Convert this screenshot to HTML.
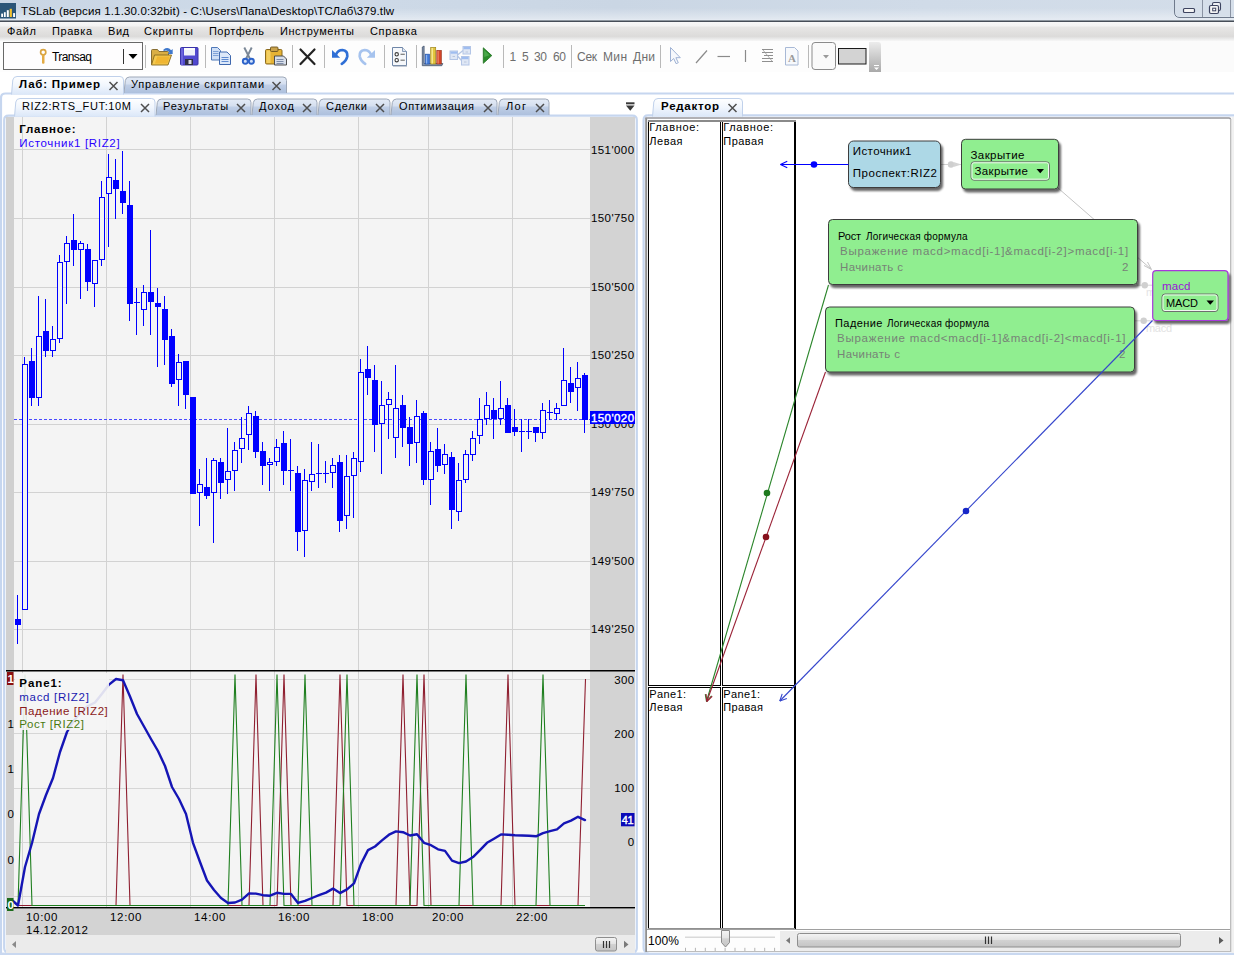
<!DOCTYPE html>
<html><head><meta charset="utf-8"><title>TSLab</title><style>
html,body{margin:0;padding:0;background:#fff;}
body{width:1234px;height:955px;overflow:hidden;position:relative;font-family:"Liberation Sans",sans-serif;}
.t{position:absolute;white-space:pre;}
svg.l{position:absolute;left:0;top:0;}
</style></head><body>
<svg class="l" width="1234" height="955" viewBox="0 0 1234 955"><defs>
<linearGradient id="gTitle" x1="0" y1="0" x2="1" y2="0"><stop offset="0" stop-color="#c9d6e5"/><stop offset="0.25" stop-color="#cedae8"/><stop offset="0.5" stop-color="#cad6e4"/><stop offset="0.75" stop-color="#d0dbe8"/><stop offset="1" stop-color="#d3dde9"/></linearGradient>
<linearGradient id="gGlow" x1="0" y1="0" x2="0" y2="1"><stop offset="0" stop-color="#ffffff" stop-opacity="0"/><stop offset="1" stop-color="#ffffff" stop-opacity="0.45"/></linearGradient>
<linearGradient id="gMenu" x1="0" y1="0" x2="0" y2="1"><stop offset="0" stop-color="#f8f8f8"/><stop offset="0.2" stop-color="#f3f3f3"/><stop offset="0.28" stop-color="#e7e6e5"/><stop offset="0.76" stop-color="#dcdbda"/><stop offset="0.88" stop-color="#e9e9e9"/><stop offset="1" stop-color="#f7f7f7"/></linearGradient>
<linearGradient id="gTabA" x1="0" y1="0" x2="0" y2="1"><stop offset="0" stop-color="#ffffff"/><stop offset="0.5" stop-color="#f1f6fd"/><stop offset="1" stop-color="#dbe7f8"/></linearGradient>
<linearGradient id="gTabI" x1="0" y1="0" x2="0" y2="1"><stop offset="0" stop-color="#e4ebf6"/><stop offset="0.42" stop-color="#d6e0f0"/><stop offset="0.52" stop-color="#bfcee6"/><stop offset="1" stop-color="#adc0dd"/></linearGradient>
<linearGradient id="gGrip" x1="0" y1="0" x2="0" y2="1"><stop offset="0" stop-color="#ececec"/><stop offset="1" stop-color="#a9a9a9"/></linearGradient>
<linearGradient id="gThumb" x1="0" y1="0" x2="0" y2="1"><stop offset="0" stop-color="#f4f4f4"/><stop offset="0.45" stop-color="#e4e4e4"/><stop offset="0.5" stop-color="#d2d2d2"/><stop offset="1" stop-color="#c4c4c4"/></linearGradient>
<filter id="sh" x="-10%" y="-10%" width="125%" height="135%"><feGaussianBlur in="SourceAlpha" stdDeviation="1.1"/><feOffset dx="2.3" dy="2.6"/><feComponentTransfer><feFuncA type="linear" slope="0.6"/></feComponentTransfer><feMerge><feMergeNode/><feMergeNode in="SourceGraphic"/></feMerge></filter>
</defs><rect x="0" y="0" width="1234" height="21" fill="url(#gTitle)" />
<rect x="0" y="8" width="1234" height="12" fill="url(#gGlow)"/>
<rect x="0" y="19" width="1234" height="1" fill="#e4eaf2" />
<rect x="0" y="20" width="1234" height="1" fill="#8e969f" />
<rect x="0" y="21" width="1234" height="1" fill="#474e58" />
<rect x="0" y="3" width="16" height="15.5" fill="#2a5578" />
<rect x="1.2" y="13.6" width="1.8" height="3.4000000000000004" fill="#fff" />
<rect x="3.9" y="12.2" width="1.8" height="4.800000000000001" fill="#fff" />
<rect x="6.8" y="10.2" width="2" height="6.800000000000001" fill="#fff" />
<rect x="9.7" y="8.8" width="2.2" height="8.2" fill="#f2c230" />
<rect x="13.1" y="13.1" width="2" height="3.9000000000000004" fill="#fff" /></svg>
<span class="t" style="left:21.0px;top:6.0px;font-size:11.5px;line-height:11.5px;color:#000;letter-spacing:0.14px;">TSLab (версия 1.1.30.0:32bit) - C:\Users\Папа\Desktop\ТСЛаб\379.tlw</span>
<svg class="l" width="1234" height="955" viewBox="0 0 1234 955"><path d="M1174.5,0 V12 Q1174.5,17.5 1180,17.5 H1234" fill="none" stroke="#6f7a8c" stroke-width="1"/>
<path d="M1175.5,0 V12 Q1175.5,16.5 1180,16.5 H1234 V0 Z" fill="#d6dfea"/>
<line x1="1202.5" y1="0" x2="1202.5" y2="17" stroke="#8a93a3" stroke-width="1" />
<line x1="1230.5" y1="0" x2="1230.5" y2="17" stroke="#8a93a3" stroke-width="1" />
<rect x="1183.5" y="8.5" width="11" height="4" rx="1" fill="#f4f4f4" stroke="#3d4460" stroke-width="1.2"/>
<rect x="1212.5" y="2.5" width="8" height="8" rx="1.5" fill="#eef0f4" stroke="#3d4460" stroke-width="1.1"/>
<rect x="1209.5" y="5.5" width="9" height="8" rx="1.5" fill="#f4f4f4" stroke="#3d4460" stroke-width="1.2"/>
<rect x="1212.7" y="8.2" width="3" height="2.6" fill="#fff" stroke="#3d4460" stroke-width="1"/>
<rect x="0" y="22" width="1234" height="19" fill="url(#gMenu)" /></svg>
<span class="t" style="left:7.0px;top:26.0px;font-size:11px;line-height:11px;color:#000;letter-spacing:0.65px;">Файл</span>
<span class="t" style="left:52.0px;top:26.0px;font-size:11px;line-height:11px;color:#000;letter-spacing:0.57px;">Правка</span>
<span class="t" style="left:108.0px;top:26.0px;font-size:11px;line-height:11px;color:#000;letter-spacing:0.55px;">Вид</span>
<span class="t" style="left:144.0px;top:26.0px;font-size:11px;line-height:11px;color:#000;letter-spacing:0.85px;">Скрипты</span>
<span class="t" style="left:209.0px;top:26.0px;font-size:11px;line-height:11px;color:#000;letter-spacing:0.44px;">Портфель</span>
<span class="t" style="left:280.0px;top:26.0px;font-size:11px;line-height:11px;color:#000;letter-spacing:0.54px;">Инструменты</span>
<span class="t" style="left:370.0px;top:26.0px;font-size:11px;line-height:11px;color:#000;letter-spacing:0.64px;">Справка</span>
<svg class="l" width="1234" height="955" viewBox="0 0 1234 955"><rect x="0" y="41" width="1234" height="31" fill="#fbfbfb" />
<rect x="0" y="41" width="870" height="31" fill="#fdfdfd" />
<rect x="3.5" y="42.5" width="139" height="27" fill="#fefdfe" stroke="#686868" stroke-width="1"/>
<line x1="123.5" y1="49" x2="123.5" y2="64" stroke="#333" stroke-width="1" />
<path d="M128.5,54 h9 l-4.5,5 z" fill="#000"/>
<circle cx="43.2" cy="52.3" r="2.6" fill="#fff" stroke="#d9a441" stroke-width="1.7"/><rect x="42" y="54.5" width="2.5" height="9.2" rx="1" fill="#e3ab45"/></svg>
<span class="t" style="left:52.0px;top:51.0px;font-size:12px;line-height:12px;color:#000;letter-spacing:-0.60px;">Transaq</span>
<svg class="l" width="1234" height="955" viewBox="0 0 1234 955"><line x1="145.5" y1="45" x2="145.5" y2="68" stroke="#b9b9b9" stroke-width="1" />
<line x1="205.5" y1="45" x2="205.5" y2="68" stroke="#b9b9b9" stroke-width="1" />
<line x1="292.5" y1="45" x2="292.5" y2="68" stroke="#b9b9b9" stroke-width="1" />
<line x1="324.5" y1="45" x2="324.5" y2="68" stroke="#b9b9b9" stroke-width="1" />
<line x1="384.5" y1="45" x2="384.5" y2="68" stroke="#b9b9b9" stroke-width="1" />
<line x1="416.5" y1="45" x2="416.5" y2="68" stroke="#b9b9b9" stroke-width="1" />
<line x1="503.5" y1="45" x2="503.5" y2="68" stroke="#b9b9b9" stroke-width="1" />
<line x1="571.5" y1="45" x2="571.5" y2="68" stroke="#b9b9b9" stroke-width="1" />
<line x1="660.5" y1="45" x2="660.5" y2="68" stroke="#b9b9b9" stroke-width="1" />
<line x1="808.5" y1="45" x2="808.5" y2="68" stroke="#b9b9b9" stroke-width="1" />
<path d="M151.5,64.5 V50.5 q0,-1 1,-1 h5 l1.5,2 h8.5 q1,0 1,1 V55" fill="#d9ae45" stroke="#7c6228" stroke-width="0.9"/>
<path d="M151.5,65 l3,-10 h17 l-3.5,10 z" fill="#f4c94e" stroke="#86691f" stroke-width="0.9"/>
<path d="M155,63.5 l2.2,-7 h12.5 l-2.4,7 z" fill="#f0b632"/>
<path d="M163.5,49.5 q4.5,-3.2 7.6,0.8 l1.6,-1.4 v5 h-5 l1.7,-1.7 q-2.2,-2.6 -5.9,-1 z" fill="#3f78cc"/>
<rect x="180.5" y="47.5" width="17.5" height="17.5" rx="1" fill="#5049cf" stroke="#3a33a8" stroke-width="1"/>
<rect x="184" y="48" width="11" height="7.5" fill="#eef0f8" />
<rect x="184" y="48" width="11" height="2" fill="#fdfdfd" />
<rect x="185" y="59" width="8" height="6" fill="#2f2f45" />
<rect x="188.5" y="60" width="3" height="4" fill="#d5d5e4" />
<rect x="181" y="48" width="2" height="17" fill="#6a63dc" />
<path d="M211.5,47.5 h6 l3,3 v9.5 h-9 z" fill="#cfdff6" stroke="#4f78b8" stroke-width="1"/>
<line x1="213" y1="51.5" x2="218.5" y2="51.5" stroke="#7fa2d8" stroke-width="1" />
<line x1="213" y1="53.5" x2="218.5" y2="53.5" stroke="#7fa2d8" stroke-width="1" />
<line x1="213" y1="55.5" x2="218.5" y2="55.5" stroke="#7fa2d8" stroke-width="1" />
<path d="M219.5,52 h7.5 l3.5,3.5 v9 h-11 z" fill="#dce8f9" stroke="#3f68ae" stroke-width="1"/>
<line x1="221.5" y1="57.5" x2="228.5" y2="57.5" stroke="#5f8ad0" stroke-width="1" />
<line x1="221.5" y1="59.5" x2="228.5" y2="59.5" stroke="#5f8ad0" stroke-width="1" />
<line x1="221.5" y1="61.5" x2="228.5" y2="61.5" stroke="#5f8ad0" stroke-width="1" />
<path d="M244.3,47.5 L249.8,58.5 M251.7,47.5 L246.2,58.5" stroke="#7a8796" stroke-width="1.9" fill="none"/>
<circle cx="245.3" cy="61.3" r="2.5" fill="#cfe0fa" stroke="#2c62c9" stroke-width="1.9"/><circle cx="251.4" cy="61.3" r="2.5" fill="#cfe0fa" stroke="#2c62c9" stroke-width="1.9"/>
<rect x="265.5" y="49.5" width="16.5" height="14.5" rx="1.2" fill="#e6b335" stroke="#8a6a1e" stroke-width="1"/>
<rect x="266.5" y="50.5" width="4" height="12.5" fill="#f3cf62" />
<rect x="270.5" y="47" width="7.5" height="4.5" rx="1" fill="#c9a24a" stroke="#6b5420" stroke-width="0.9"/>
<path d="M274.5,56 h9 l3,3 v6 h-12 z" fill="#d7deea" stroke="#4e4e4e" stroke-width="1"/>
<line x1="276.5" y1="59.5" x2="283.5" y2="59.5" stroke="#7d8ca8" stroke-width="1" />
<line x1="276.5" y1="61.5" x2="283.5" y2="61.5" stroke="#7d8ca8" stroke-width="1" />
<line x1="276.5" y1="63.5" x2="283.5" y2="63.5" stroke="#7d8ca8" stroke-width="1" />
<path d="M300.5,49.5 L314.5,64 M314.5,49.5 L300.5,64" stroke="#222" stroke-width="2.2" fill="none" stroke-linecap="round"/>
<path d="M332,50 V57.8 H340.2 Z" fill="#2f6fd6"/>
<path d="M336,54.5 Q338,50 342.5,50 Q347.8,50.6 347.3,56.2 Q346.4,61 341.8,63.8" fill="none" stroke="#2f6fd6" stroke-width="2.7" stroke-linecap="round"/>
<path d="M375,50 V57.8 H366.8 Z" fill="#a6c3ee"/>
<path d="M371,54.5 Q369,50 364.5,50 Q359.2,50.6 359.7,56.2 Q360.6,61 365.2,63.8" fill="none" stroke="#a6c3ee" stroke-width="2.7" stroke-linecap="round"/>
<path d="M392.5,47.5 h10 l4,4 v14 h-14 z" fill="#f6f8fb" stroke="#6f86a8" stroke-width="1"/>
<path d="M402.5,47.5 v4 h4" fill="#dfe6f0" stroke="#6f86a8" stroke-width="0.8"/>
<line x1="393" y1="66" x2="407" y2="66" stroke="#8b98ad" stroke-width="1" />
<circle cx="396.7" cy="54.3" r="1.7" fill="#fff" stroke="#3d3d3d" stroke-width="1.1"/>
<line x1="400.5" y1="54.3" x2="404.8" y2="54.3" stroke="#777" stroke-width="1.2" />
<circle cx="396.7" cy="60.2" r="1.7" fill="#fff" stroke="#3d3d3d" stroke-width="1.1"/>
<line x1="400.5" y1="60.2" x2="404.8" y2="60.2" stroke="#777" stroke-width="1.2" />
<path d="M422.3,47 l1.8,-1 V63.5 L442.8,63.5 l-1,2.2 H422.3 Z" fill="#8496b0" stroke="#46566e" stroke-width="0.8"/>
<rect x="425.2" y="54.2" width="4.3" height="9.8" fill="#3f78d8" stroke="#2a56a8" stroke-width="0.7"/>
<rect x="430.7" y="47.5" width="5" height="16.5" fill="#e3c43c" stroke="#9c861c" stroke-width="0.7"/>
<rect x="436.8" y="50.5" width="4.5" height="13.5" fill="#d64528" stroke="#98301a" stroke-width="0.7"/>
<rect x="431.5" y="48" width="1.5" height="15.5" fill="#f4e690" />
<rect x="426" y="55" width="1.2" height="8.5" fill="#8db4f0" />
<rect x="437.5" y="51" width="1.2" height="12.5" fill="#f08a6a" />
<path d="M457.5,55 L463,50.5 M457.5,56 L461.5,60.5" fill="none" stroke="#b5c6e4" stroke-width="1.3"/>
<rect x="450" y="51" width="7.5" height="8.5" fill="#dfe7f5" stroke="#b3c5e6" stroke-width="1"/>
<rect x="450.5" y="51.5" width="6.5" height="2.2" fill="#9fbdf0" />
<line x1="452.5" y1="56.5" x2="455" y2="56.5" stroke="#b9c6dc" stroke-width="1" />
<rect x="463" y="46.5" width="7.5" height="7.5" fill="#dfe7f5" stroke="#b3c5e6" stroke-width="1"/>
<rect x="463.5" y="47.0" width="6.5" height="2.2" fill="#9fbdf0" />
<line x1="465.5" y1="52.0" x2="468" y2="52.0" stroke="#b9c6dc" stroke-width="1" />
<rect x="461.5" y="56.5" width="7.5" height="8.5" fill="#dfe7f5" stroke="#b3c5e6" stroke-width="1"/>
<rect x="462.0" y="57.0" width="6.5" height="2.2" fill="#9fbdf0" />
<line x1="464.0" y1="62.0" x2="466.5" y2="62.0" stroke="#b9c6dc" stroke-width="1" />
<path d="M483.3,47.8 L491.8,55.6 L483.3,63.3 Z" fill="#2a8c2a" stroke="#1d6e1d" stroke-width="0.8"/>
<path d="M484.2,50 L489.5,55.3 L484.2,57 Z" fill="#4aa84a"/>
<path d="M670.5,47.5 v14 l3.2,-3 l2.4,5.2 l2.2,-1 l-2.4,-5 h4.4 z" fill="#f6f8fc" stroke="#9fb2d4" stroke-width="1"/>
<line x1="696" y1="63" x2="707" y2="50.5" stroke="#8a8a8a" stroke-width="1.2" />
<line x1="717.5" y1="56.5" x2="730" y2="56.5" stroke="#8a8a8a" stroke-width="1.2" />
<line x1="745.5" y1="50" x2="745.5" y2="62" stroke="#8a8a8a" stroke-width="1.2" />
<line x1="762" y1="49.5" x2="773" y2="49.5" stroke="#8f8f8f" stroke-width="1" />
<line x1="762" y1="52.5" x2="773" y2="52.5" stroke="#8f8f8f" stroke-width="1" />
<line x1="764" y1="55.5" x2="773" y2="55.5" stroke="#8f8f8f" stroke-width="1" />
<line x1="762" y1="58.5" x2="773" y2="58.5" stroke="#8f8f8f" stroke-width="1" />
<line x1="762" y1="61.5" x2="773" y2="61.5" stroke="#8f8f8f" stroke-width="1" />
<line x1="763" y1="50" x2="772" y2="61" stroke="#9a9a9a" stroke-width="0.8" />
<path d="M785.5,47.5 h9 l3.5,3.5 v14 h-12.5 z" fill="#f7f9fc" stroke="#a8b9d6" stroke-width="1"/></svg>
<span class="t" style="left:788.0px;top:53.0px;font-size:11px;line-height:11px;color:#9a9a9a;font-weight:bold;font-family:'Liberation Serif',serif;">A</span>
<span class="t" style="left:509.5px;top:51.0px;font-size:12px;line-height:12px;color:#6d6d6d;">1</span>
<span class="t" style="left:522.0px;top:51.0px;font-size:12px;line-height:12px;color:#6d6d6d;">5</span>
<span class="t" style="left:534.0px;top:51.0px;font-size:12px;line-height:12px;color:#6d6d6d;letter-spacing:-0.35px;">30</span>
<span class="t" style="left:553.0px;top:51.0px;font-size:12px;line-height:12px;color:#6d6d6d;letter-spacing:-0.35px;">60</span>
<span class="t" style="left:577.0px;top:51.0px;font-size:12px;line-height:12px;color:#6d6d6d;letter-spacing:-0.29px;">Сек</span>
<span class="t" style="left:603.0px;top:51.0px;font-size:12px;line-height:12px;color:#6d6d6d;letter-spacing:0.34px;">Мин</span>
<span class="t" style="left:633.0px;top:51.0px;font-size:12px;line-height:12px;color:#6d6d6d;letter-spacing:0.27px;">Дни</span>
<svg class="l" width="1234" height="955" viewBox="0 0 1234 955"><rect x="812" y="42.5" width="23.5" height="27" rx="3" fill="#fafafa" stroke="#8b8b8b" stroke-width="1"/>
<path d="M823,55 h6 l-3,3.5 z" fill="#9a9a9a"/>
<rect x="838.5" y="48.5" width="27.5" height="15.5" fill="#d3d3d3" stroke="#1a1a1a" stroke-width="1"/>
<path d="M869,42 H878 Q881,42 881,45 V72 H869 Z" fill="url(#gGrip)"/>
<line x1="874" y1="65.5" x2="879" y2="65.5" stroke="#fff" stroke-width="1" />
<path d="M874,67.5 h5 l-2.5,2.5 z" fill="#fff"/>
<path d="M1,955 V98 Q1,93.5 5.5,93.5 H1234" fill="none" stroke="#c6d6ef" stroke-width="2.2"/>
<path d="M124.0,93 L125.3,80.5 Q126.0,77.0 129.5,77.0 H283 Q286.5,77.0 286.5,80.5 V93 Z" fill="url(#gTabI)" stroke="none"/>
<path d="M124.0,93 L125.3,80.5 Q126.0,77.0 129.5,77.0 H283 Q286.5,77.0 286.5,80.5 V93" fill="none" stroke="#9ea8b8" stroke-width="1"/>
<path d="M11.5,94.5 L12.8,80 Q13.5,76.5 17,76.5 H120 Q123.5,76.5 123.5,80 V94.5 Z" fill="url(#gTabA)" stroke="none"/>
<path d="M11.5,94.5 L12.8,80 Q13.5,76.5 17,76.5 H120 Q123.5,76.5 123.5,80 V94.5" fill="none" stroke="#c0d1eb" stroke-width="1"/></svg>
<span class="t" style="left:19.0px;top:79.0px;font-size:11.5px;line-height:11.5px;color:#000;font-weight:bold;letter-spacing:0.78px;">Лаб: Пример</span>
<svg class="l" width="1234" height="955" viewBox="0 0 1234 955"><path d="M109.5,82 L117.5,90 M117.5,82 L109.5,90" stroke="#4e4e4e" stroke-width="1.5" fill="none"/></svg>
<span class="t" style="left:131.0px;top:79.0px;font-size:11px;line-height:11px;color:#000;letter-spacing:0.82px;">Управление скриптами</span>
<svg class="l" width="1234" height="955" viewBox="0 0 1234 955"><path d="M272.5,82 L280.5,90 M280.5,82 L272.5,90" stroke="#4e4e4e" stroke-width="1.5" fill="none"/>
<path d="M9,952.6 Q4.2,952.6 4.2,948 V120 Q4.2,115.6 8.5,115.6 H632.5 Q636.8,115.6 636.8,120 V948 Q636.8,952.6 632,952.6" fill="none" stroke="#c6d6ef" stroke-width="2.2"/>
<path d="M498.0,115 L499.3,102.5 Q500.0,99.0 503.5,99.0 H545.5 Q549.0,99.0 549.0,102.5 V115 Z" fill="url(#gTabI)" stroke="none"/>
<path d="M498.0,115 L499.3,102.5 Q500.0,99.0 503.5,99.0 H545.5 Q549.0,99.0 549.0,102.5 V115" fill="none" stroke="#9ea8b8" stroke-width="1"/>
<path d="M391.0,115 L392.3,102.5 Q393.0,99.0 396.5,99.0 H493.5 Q497.0,99.0 497.0,102.5 V115 Z" fill="url(#gTabI)" stroke="none"/>
<path d="M391.0,115 L392.3,102.5 Q393.0,99.0 396.5,99.0 H493.5 Q497.0,99.0 497.0,102.5 V115" fill="none" stroke="#9ea8b8" stroke-width="1"/>
<path d="M318.0,115 L319.3,102.5 Q320.0,99.0 323.5,99.0 H386.5 Q390.0,99.0 390.0,102.5 V115 Z" fill="url(#gTabI)" stroke="none"/>
<path d="M318.0,115 L319.3,102.5 Q320.0,99.0 323.5,99.0 H386.5 Q390.0,99.0 390.0,102.5 V115" fill="none" stroke="#9ea8b8" stroke-width="1"/>
<path d="M252.0,115 L253.3,102.5 Q254.0,99.0 257.5,99.0 H313.5 Q317.0,99.0 317.0,102.5 V115 Z" fill="url(#gTabI)" stroke="none"/>
<path d="M252.0,115 L253.3,102.5 Q254.0,99.0 257.5,99.0 H313.5 Q317.0,99.0 317.0,102.5 V115" fill="none" stroke="#9ea8b8" stroke-width="1"/>
<path d="M156.0,115 L157.3,102.5 Q158.0,99.0 161.5,99.0 H247.5 Q251.0,99.0 251.0,102.5 V115 Z" fill="url(#gTabI)" stroke="none"/>
<path d="M156.0,115 L157.3,102.5 Q158.0,99.0 161.5,99.0 H247.5 Q251.0,99.0 251.0,102.5 V115" fill="none" stroke="#9ea8b8" stroke-width="1"/>
<path d="M14.5,116.5 L15.8,102 Q16.5,98.5 20,98.5 H151.5 Q155.0,98.5 155.0,102 V116.5 Z" fill="url(#gTabA)" stroke="none"/>
<path d="M14.5,116.5 L15.8,102 Q16.5,98.5 20,98.5 H151.5 Q155.0,98.5 155.0,102 V116.5" fill="none" stroke="#c0d1eb" stroke-width="1"/></svg>
<span class="t" style="left:22.0px;top:101.0px;font-size:11px;line-height:11px;color:#000;letter-spacing:0.64px;">RIZ2:RTS_FUT:10M</span>
<svg class="l" width="1234" height="955" viewBox="0 0 1234 955"><path d="M141,104 L149,112 M149,104 L141,112" stroke="#4e4e4e" stroke-width="1.5" fill="none"/></svg>
<span class="t" style="left:163.0px;top:101.0px;font-size:11px;line-height:11px;color:#000;letter-spacing:0.79px;">Результаты</span>
<svg class="l" width="1234" height="955" viewBox="0 0 1234 955"><path d="M237,104 L245,112 M245,104 L237,112" stroke="#4e4e4e" stroke-width="1.5" fill="none"/></svg>
<span class="t" style="left:259.0px;top:101.0px;font-size:11px;line-height:11px;color:#000;letter-spacing:0.94px;">Доход</span>
<svg class="l" width="1234" height="955" viewBox="0 0 1234 955"><path d="M303,104 L311,112 M311,104 L303,112" stroke="#4e4e4e" stroke-width="1.5" fill="none"/></svg>
<span class="t" style="left:326.0px;top:101.0px;font-size:11px;line-height:11px;color:#000;letter-spacing:0.70px;">Сделки</span>
<svg class="l" width="1234" height="955" viewBox="0 0 1234 955"><path d="M376,104 L384,112 M384,104 L376,112" stroke="#4e4e4e" stroke-width="1.5" fill="none"/></svg>
<span class="t" style="left:399.0px;top:101.0px;font-size:11px;line-height:11px;color:#000;letter-spacing:0.60px;">Оптимизация</span>
<svg class="l" width="1234" height="955" viewBox="0 0 1234 955"><path d="M484,104 L492,112 M492,104 L484,112" stroke="#4e4e4e" stroke-width="1.5" fill="none"/></svg>
<span class="t" style="left:506.0px;top:101.0px;font-size:11px;line-height:11px;color:#000;letter-spacing:1.33px;">Лог</span>
<svg class="l" width="1234" height="955" viewBox="0 0 1234 955"><path d="M536,104 L544,112 M544,104 L536,112" stroke="#4e4e4e" stroke-width="1.5" fill="none"/>
<rect x="626" y="102.3" width="8.5" height="2" fill="#3a3a3a" />
<path d="M626,105.6 h8.5 l-4.25,5.2 z" fill="#3a3a3a"/>
<path d="M648.5,952.6 Q643.6,952.6 643.6,948 V120 Q643.6,115.4 648,115.4 H1234" fill="none" stroke="#c6d6ef" stroke-width="2.2"/>
<path d="M652.5,116.5 L653.8,102 Q654.5,98.5 658,98.5 H739 Q742.5,98.5 742.5,102 V116.5 Z" fill="url(#gTabA)" stroke="none"/>
<path d="M652.5,116.5 L653.8,102 Q654.5,98.5 658,98.5 H739 Q742.5,98.5 742.5,102 V116.5" fill="none" stroke="#c0d1eb" stroke-width="1"/></svg>
<span class="t" style="left:661.0px;top:101.0px;font-size:11.5px;line-height:11.5px;color:#000;font-weight:bold;letter-spacing:0.75px;">Редактор</span>
<svg class="l" width="1234" height="955" viewBox="0 0 1234 955"><path d="M728.5,104 L736.5,112 M736.5,104 L728.5,112" stroke="#4e4e4e" stroke-width="1.5" fill="none"/>
<rect x="0" y="952.6" width="1234" height="2.4" fill="#c9d8f0" />
<rect x="6" y="117" width="8" height="819" fill="#d0d0d0" />
<rect x="14" y="117" width="576" height="790" fill="#f4f4f4" />
<rect x="590" y="117" width="45" height="790" fill="#d3d3d3" />
<rect x="6" y="908" width="629" height="27" fill="#d3d3d3" />
<rect x="6" y="935" width="629" height="18" fill="#ebebeb" />
<line x1="22.5" y1="117" x2="22.5" y2="912" stroke="#d2d2d2" stroke-width="1" />
<line x1="106.5" y1="117" x2="106.5" y2="912" stroke="#d2d2d2" stroke-width="1" />
<line x1="190.5" y1="117" x2="190.5" y2="912" stroke="#d2d2d2" stroke-width="1" />
<line x1="274.5" y1="117" x2="274.5" y2="912" stroke="#d2d2d2" stroke-width="1" />
<line x1="358.5" y1="117" x2="358.5" y2="912" stroke="#d2d2d2" stroke-width="1" />
<line x1="428.5" y1="117" x2="428.5" y2="912" stroke="#d2d2d2" stroke-width="1" />
<line x1="512.5" y1="117" x2="512.5" y2="912" stroke="#d2d2d2" stroke-width="1" />
<line x1="14" y1="149.5" x2="590" y2="149.5" stroke="#d2d2d2" stroke-width="1" />
<line x1="14" y1="218.5" x2="590" y2="218.5" stroke="#d2d2d2" stroke-width="1" />
<line x1="14" y1="287.5" x2="590" y2="287.5" stroke="#d2d2d2" stroke-width="1" />
<line x1="14" y1="355.5" x2="590" y2="355.5" stroke="#d2d2d2" stroke-width="1" />
<line x1="14" y1="424.5" x2="590" y2="424.5" stroke="#d2d2d2" stroke-width="1" />
<line x1="14" y1="492.5" x2="590" y2="492.5" stroke="#d2d2d2" stroke-width="1" />
<line x1="14" y1="561.5" x2="590" y2="561.5" stroke="#d2d2d2" stroke-width="1" />
<line x1="14" y1="629.5" x2="590" y2="629.5" stroke="#d2d2d2" stroke-width="1" />
<line x1="14" y1="679.5" x2="590" y2="679.5" stroke="#d6d6d6" stroke-width="1" />
<line x1="14" y1="733.5" x2="590" y2="733.5" stroke="#d6d6d6" stroke-width="1" />
<line x1="14" y1="788.5" x2="590" y2="788.5" stroke="#d6d6d6" stroke-width="1" />
<line x1="14" y1="842.5" x2="590" y2="842.5" stroke="#d6d6d6" stroke-width="1" />
<line x1="14" y1="896.5" x2="590" y2="896.5" stroke="#d6d6d6" stroke-width="1" /></svg>
<span class="t" style="left:591.0px;top:145.0px;font-size:11.5px;line-height:11.5px;color:#000;letter-spacing:0.41px;">151'000</span>
<span class="t" style="left:591.0px;top:213.0px;font-size:11.5px;line-height:11.5px;color:#000;letter-spacing:0.41px;">150'750</span>
<span class="t" style="left:591.0px;top:282.0px;font-size:11.5px;line-height:11.5px;color:#000;letter-spacing:0.41px;">150'500</span>
<span class="t" style="left:591.0px;top:350.0px;font-size:11.5px;line-height:11.5px;color:#000;letter-spacing:0.41px;">150'250</span>
<span class="t" style="left:591.0px;top:419.0px;font-size:11.5px;line-height:11.5px;color:#000;letter-spacing:0.41px;">150'000</span>
<span class="t" style="left:591.0px;top:487.0px;font-size:11.5px;line-height:11.5px;color:#000;letter-spacing:0.41px;">149'750</span>
<span class="t" style="left:591.0px;top:556.0px;font-size:11.5px;line-height:11.5px;color:#000;letter-spacing:0.41px;">149'500</span>
<span class="t" style="left:591.0px;top:624.0px;font-size:11.5px;line-height:11.5px;color:#000;letter-spacing:0.41px;">149'250</span>
<svg class="l" width="1234" height="955" viewBox="0 0 1234 955"><line x1="14" y1="419.5" x2="590" y2="419.5" stroke="#4a4aff" stroke-width="1" stroke-dasharray="3 2"/>
<rect x="17" y="595" width="1" height="49" fill="#0000ff"/>
<rect x="15" y="619" width="6" height="6" fill="#0000ff"/>
<rect x="24" y="357" width="1" height="253" fill="#0000ff"/>
<rect x="22.5" y="364.5" width="5" height="245" fill="#f4f4f4" stroke="#0000ff" stroke-width="1"/>
<rect x="31" y="348" width="1" height="58" fill="#0000ff"/>
<rect x="29" y="361" width="6" height="37" fill="#0000ff"/>
<rect x="38" y="296" width="1" height="110" fill="#0000ff"/>
<rect x="36.5" y="336.5" width="5" height="61" fill="#f4f4f4" stroke="#0000ff" stroke-width="1"/>
<rect x="45" y="299" width="1" height="58" fill="#0000ff"/>
<rect x="43" y="331" width="6" height="20" fill="#0000ff"/>
<rect x="52" y="326" width="1" height="31" fill="#0000ff"/>
<rect x="50.5" y="339.5" width="5" height="11" fill="#f4f4f4" stroke="#0000ff" stroke-width="1"/>
<rect x="59" y="255" width="1" height="88" fill="#0000ff"/>
<rect x="57.5" y="262.5" width="5" height="76" fill="#f4f4f4" stroke="#0000ff" stroke-width="1"/>
<rect x="66" y="236" width="1" height="68" fill="#0000ff"/>
<rect x="64.5" y="243.5" width="5" height="18" fill="#f4f4f4" stroke="#0000ff" stroke-width="1"/>
<rect x="73" y="214" width="1" height="52" fill="#0000ff"/>
<rect x="71" y="240" width="6" height="10" fill="#0000ff"/>
<rect x="80" y="241" width="1" height="58" fill="#0000ff"/>
<rect x="78.5" y="243.5" width="5" height="6" fill="#f4f4f4" stroke="#0000ff" stroke-width="1"/>
<rect x="87" y="244" width="1" height="47" fill="#0000ff"/>
<rect x="85" y="249" width="6" height="33" fill="#0000ff"/>
<rect x="94" y="260" width="1" height="47" fill="#0000ff"/>
<rect x="92.5" y="260.5" width="5" height="23" fill="#f4f4f4" stroke="#0000ff" stroke-width="1"/>
<rect x="101" y="181" width="1" height="85" fill="#0000ff"/>
<rect x="99.5" y="197.5" width="5" height="62" fill="#f4f4f4" stroke="#0000ff" stroke-width="1"/>
<rect x="108" y="154" width="1" height="93" fill="#0000ff"/>
<rect x="106.5" y="177.5" width="5" height="16" fill="#f4f4f4" stroke="#0000ff" stroke-width="1"/>
<rect x="115" y="159" width="1" height="60" fill="#0000ff"/>
<rect x="113" y="180" width="6" height="9" fill="#0000ff"/>
<rect x="122" y="151" width="1" height="63" fill="#0000ff"/>
<rect x="120" y="191" width="6" height="12" fill="#0000ff"/>
<rect x="129" y="181" width="1" height="140" fill="#0000ff"/>
<rect x="127" y="205" width="6" height="99" fill="#0000ff"/>
<rect x="136" y="288" width="1" height="47" fill="#0000ff"/>
<rect x="134" y="302" width="6" height="1" fill="#0000ff"/>
<rect x="143" y="285" width="1" height="41" fill="#0000ff"/>
<rect x="141.5" y="292.5" width="5" height="17" fill="#f4f4f4" stroke="#0000ff" stroke-width="1"/>
<rect x="150" y="230" width="1" height="105" fill="#0000ff"/>
<rect x="148" y="292" width="6" height="10" fill="#0000ff"/>
<rect x="157" y="288" width="1" height="79" fill="#0000ff"/>
<rect x="155" y="303" width="6" height="4" fill="#0000ff"/>
<rect x="164" y="296" width="1" height="69" fill="#0000ff"/>
<rect x="162" y="309" width="6" height="31" fill="#0000ff"/>
<rect x="171" y="329" width="1" height="58" fill="#0000ff"/>
<rect x="169" y="336" width="6" height="48" fill="#0000ff"/>
<rect x="178" y="354" width="1" height="52" fill="#0000ff"/>
<rect x="176.5" y="362.5" width="5" height="17" fill="#f4f4f4" stroke="#0000ff" stroke-width="1"/>
<rect x="185" y="361" width="1" height="48" fill="#0000ff"/>
<rect x="183" y="361" width="6" height="34" fill="#0000ff"/>
<rect x="192" y="397" width="1" height="97" fill="#0000ff"/>
<rect x="190" y="397" width="6" height="97" fill="#0000ff"/>
<rect x="199" y="469" width="1" height="57" fill="#0000ff"/>
<rect x="197.5" y="484.5" width="5" height="8" fill="#f4f4f4" stroke="#0000ff" stroke-width="1"/>
<rect x="206" y="458" width="1" height="41" fill="#0000ff"/>
<rect x="204" y="487" width="6" height="9" fill="#0000ff"/>
<rect x="213" y="458" width="1" height="85" fill="#0000ff"/>
<rect x="211.5" y="460.5" width="5" height="32" fill="#f4f4f4" stroke="#0000ff" stroke-width="1"/>
<rect x="220" y="458" width="1" height="41" fill="#0000ff"/>
<rect x="218" y="462" width="6" height="21" fill="#0000ff"/>
<rect x="227" y="428" width="1" height="66" fill="#0000ff"/>
<rect x="225.5" y="471.5" width="5" height="8" fill="#f4f4f4" stroke="#0000ff" stroke-width="1"/>
<rect x="234" y="442" width="1" height="49" fill="#0000ff"/>
<rect x="232.5" y="450.5" width="5" height="20" fill="#f4f4f4" stroke="#0000ff" stroke-width="1"/>
<rect x="241" y="417" width="1" height="46" fill="#0000ff"/>
<rect x="239.5" y="438.5" width="5" height="10" fill="#f4f4f4" stroke="#0000ff" stroke-width="1"/>
<rect x="248" y="406" width="1" height="44" fill="#0000ff"/>
<rect x="246.5" y="413.5" width="5" height="21" fill="#f4f4f4" stroke="#0000ff" stroke-width="1"/>
<rect x="255" y="411" width="1" height="47" fill="#0000ff"/>
<rect x="253" y="416" width="6" height="36" fill="#0000ff"/>
<rect x="262" y="442" width="1" height="43" fill="#0000ff"/>
<rect x="260" y="451" width="6" height="15" fill="#0000ff"/>
<rect x="269" y="458" width="1" height="33" fill="#0000ff"/>
<rect x="267.5" y="462.5" width="5" height="2" fill="#f4f4f4" stroke="#0000ff" stroke-width="1"/>
<rect x="276" y="439" width="1" height="27" fill="#0000ff"/>
<rect x="274.5" y="447.5" width="5" height="14" fill="#f4f4f4" stroke="#0000ff" stroke-width="1"/>
<rect x="283" y="431" width="1" height="54" fill="#0000ff"/>
<rect x="281" y="443" width="6" height="28" fill="#0000ff"/>
<rect x="290" y="439" width="1" height="52" fill="#0000ff"/>
<rect x="288" y="470" width="6" height="1" fill="#0000ff"/>
<rect x="297" y="466" width="1" height="85" fill="#0000ff"/>
<rect x="295" y="473" width="6" height="59" fill="#0000ff"/>
<rect x="304" y="469" width="1" height="88" fill="#0000ff"/>
<rect x="302.5" y="480.5" width="5" height="50" fill="#f4f4f4" stroke="#0000ff" stroke-width="1"/>
<rect x="311" y="442" width="1" height="49" fill="#0000ff"/>
<rect x="309.5" y="474.5" width="5" height="7" fill="#f4f4f4" stroke="#0000ff" stroke-width="1"/>
<rect x="318" y="444" width="1" height="44" fill="#0000ff"/>
<rect x="316" y="473" width="6" height="1" fill="#0000ff"/>
<rect x="325" y="461" width="1" height="22" fill="#0000ff"/>
<rect x="323" y="473" width="6" height="1" fill="#0000ff"/>
<rect x="332" y="458" width="1" height="30" fill="#0000ff"/>
<rect x="330.5" y="465.5" width="5" height="7" fill="#f4f4f4" stroke="#0000ff" stroke-width="1"/>
<rect x="339" y="455" width="1" height="77" fill="#0000ff"/>
<rect x="337" y="462" width="6" height="59" fill="#0000ff"/>
<rect x="346" y="455" width="1" height="74" fill="#0000ff"/>
<rect x="344.5" y="476.5" width="5" height="39" fill="#f4f4f4" stroke="#0000ff" stroke-width="1"/>
<rect x="353" y="452" width="1" height="66" fill="#0000ff"/>
<rect x="351.5" y="458.5" width="5" height="17" fill="#f4f4f4" stroke="#0000ff" stroke-width="1"/>
<rect x="360" y="359" width="1" height="113" fill="#0000ff"/>
<rect x="358.5" y="372.5" width="5" height="89" fill="#f4f4f4" stroke="#0000ff" stroke-width="1"/>
<rect x="367" y="346" width="1" height="49" fill="#0000ff"/>
<rect x="365" y="369" width="6" height="9" fill="#0000ff"/>
<rect x="374" y="365" width="1" height="87" fill="#0000ff"/>
<rect x="372" y="380" width="6" height="45" fill="#0000ff"/>
<rect x="381" y="381" width="1" height="93" fill="#0000ff"/>
<rect x="379.5" y="405.5" width="5" height="18" fill="#f4f4f4" stroke="#0000ff" stroke-width="1"/>
<rect x="388" y="392" width="1" height="47" fill="#0000ff"/>
<rect x="386.5" y="399.5" width="5" height="5" fill="#f4f4f4" stroke="#0000ff" stroke-width="1"/>
<rect x="395" y="365" width="1" height="93" fill="#0000ff"/>
<rect x="393.5" y="408.5" width="5" height="29" fill="#f4f4f4" stroke="#0000ff" stroke-width="1"/>
<rect x="402" y="395" width="1" height="52" fill="#0000ff"/>
<rect x="400" y="405" width="6" height="23" fill="#0000ff"/>
<rect x="409" y="417" width="1" height="49" fill="#0000ff"/>
<rect x="407" y="427" width="6" height="17" fill="#0000ff"/>
<rect x="416" y="400" width="1" height="63" fill="#0000ff"/>
<rect x="414.5" y="416.5" width="5" height="26" fill="#f4f4f4" stroke="#0000ff" stroke-width="1"/>
<rect x="423" y="411" width="1" height="74" fill="#0000ff"/>
<rect x="421" y="413" width="6" height="67" fill="#0000ff"/>
<rect x="430" y="442" width="1" height="63" fill="#0000ff"/>
<rect x="428.5" y="451.5" width="5" height="28" fill="#f4f4f4" stroke="#0000ff" stroke-width="1"/>
<rect x="437" y="428" width="1" height="44" fill="#0000ff"/>
<rect x="435" y="449" width="6" height="17" fill="#0000ff"/>
<rect x="444" y="444" width="1" height="30" fill="#0000ff"/>
<rect x="442.5" y="454.5" width="5" height="10" fill="#f4f4f4" stroke="#0000ff" stroke-width="1"/>
<rect x="451" y="452" width="1" height="77" fill="#0000ff"/>
<rect x="449" y="457" width="6" height="53" fill="#0000ff"/>
<rect x="458" y="463" width="1" height="58" fill="#0000ff"/>
<rect x="456.5" y="480.5" width="5" height="31" fill="#f4f4f4" stroke="#0000ff" stroke-width="1"/>
<rect x="465" y="450" width="1" height="33" fill="#0000ff"/>
<rect x="463.5" y="454.5" width="5" height="25" fill="#f4f4f4" stroke="#0000ff" stroke-width="1"/>
<rect x="472" y="431" width="1" height="30" fill="#0000ff"/>
<rect x="470.5" y="438.5" width="5" height="16" fill="#f4f4f4" stroke="#0000ff" stroke-width="1"/>
<rect x="479" y="398" width="1" height="46" fill="#0000ff"/>
<rect x="477.5" y="419.5" width="5" height="16" fill="#f4f4f4" stroke="#0000ff" stroke-width="1"/>
<rect x="486" y="392" width="1" height="33" fill="#0000ff"/>
<rect x="484.5" y="405.5" width="5" height="13" fill="#f4f4f4" stroke="#0000ff" stroke-width="1"/>
<rect x="493" y="398" width="1" height="41" fill="#0000ff"/>
<rect x="491" y="410" width="6" height="9" fill="#0000ff"/>
<rect x="500" y="381" width="1" height="44" fill="#0000ff"/>
<rect x="498.5" y="408.5" width="5" height="10" fill="#f4f4f4" stroke="#0000ff" stroke-width="1"/>
<rect x="507" y="398" width="1" height="35" fill="#0000ff"/>
<rect x="505" y="405" width="6" height="28" fill="#0000ff"/>
<rect x="514" y="409" width="1" height="27" fill="#0000ff"/>
<rect x="512" y="427" width="6" height="5" fill="#0000ff"/>
<rect x="521" y="419" width="1" height="33" fill="#0000ff"/>
<rect x="519" y="431" width="6" height="1" fill="#0000ff"/>
<rect x="528" y="419" width="1" height="20" fill="#0000ff"/>
<rect x="526" y="431" width="6" height="1" fill="#0000ff"/>
<rect x="535" y="427" width="1" height="15" fill="#0000ff"/>
<rect x="533" y="427" width="6" height="6" fill="#0000ff"/>
<rect x="542" y="403" width="1" height="36" fill="#0000ff"/>
<rect x="540.5" y="410.5" width="5" height="22" fill="#f4f4f4" stroke="#0000ff" stroke-width="1"/>
<rect x="549" y="400" width="1" height="20" fill="#0000ff"/>
<rect x="547" y="412" width="6" height="1" fill="#0000ff"/>
<rect x="556" y="403" width="1" height="17" fill="#0000ff"/>
<rect x="554.5" y="408.5" width="5" height="5" fill="#f4f4f4" stroke="#0000ff" stroke-width="1"/>
<rect x="563" y="348" width="1" height="58" fill="#0000ff"/>
<rect x="561.5" y="380.5" width="5" height="25" fill="#f4f4f4" stroke="#0000ff" stroke-width="1"/>
<rect x="570" y="367" width="1" height="36" fill="#0000ff"/>
<rect x="568" y="383" width="6" height="9" fill="#0000ff"/>
<rect x="577" y="362" width="1" height="49" fill="#0000ff"/>
<rect x="575.5" y="378.5" width="5" height="9" fill="#f4f4f4" stroke="#0000ff" stroke-width="1"/>
<rect x="584" y="373" width="1" height="60" fill="#0000ff"/>
<rect x="582" y="375" width="6" height="45" fill="#0000ff"/>
<rect x="590" y="411" width="45" height="13" fill="#0000ff" /></svg>
<span class="t" style="left:591.0px;top:413.0px;font-size:11.5px;line-height:11.5px;color:#fff;letter-spacing:0.41px;-webkit-text-stroke:0.4px #fff;">150'020</span>
<span class="t" style="left:19.3px;top:124.0px;font-size:11.5px;line-height:11.5px;color:#000;font-weight:bold;letter-spacing:0.76px;">Главное:</span>
<span class="t" style="left:19.3px;top:138.0px;font-size:11.5px;line-height:11.5px;color:#2a00ff;letter-spacing:0.69px;">Источник1 [RIZ2]</span>
<svg class="l" width="1234" height="955" viewBox="0 0 1234 955"><rect x="6" y="670" width="629" height="1.5" fill="#000" />
<polyline points="18,905.5 116,905.5 123,674.5 130,905.5 249,905.5 256,674.5 263,905.5 277,905.5 284,674.5 291,905.5 333,905.5 340,674.5 347,905.5 396,905.5 403,674.5 410,905.5 417,905.5 424,674.5 431,905.5 501,905.5 508,674.5 515,905.5 578,905.5 585.5,679" fill="none" stroke="#8f1f30" stroke-width="1.1" stroke-linejoin="miter"/>
<polyline points="18,905.5 18,905.5 25,674.5 32,905.5 228,905.5 235,674.5 242,905.5 270,905.5 277,674.5 284,905.5 298,905.5 305,674.5 312,905.5 340,905.5 347,674.5 354,905.5 410,905.5 417,674.5 424,905.5 459,905.5 466,674.5 473,905.5 536,905.5 543,674.5 550,905.5 585,905.5" fill="none" stroke="#1f7f1f" stroke-width="1.1" stroke-linejoin="miter"/>
<polyline points="13,901 18,905.5 25,867 32,843 39,814 46,795 53,778 60,752 67,732 74,720.5 81,712 88,706 95,702.5 102,693.8 109,684.6 116,679 123,680.2 130,696.5 137,714 144,726.5 151,739 158,751 165,766 172,787 179,799 186,814 193,842.8 200,862 207,880.5 214,890 221,898 228,903 235,902.5 242,899.6 249,893.4 256,893.6 263,895.2 270,895.7 277,892.8 284,893.9 291,893.9 298,902.9 305,900.9 312,898 319,895.2 326,892.6 333,888.6 340,893.1 347,889.4 354,883.4 361,863.9 368,850.1 375,846.5 382,840.4 389,834.7 396,831.4 403,832.2 410,835.5 417,834.2 424,842.8 431,845.2 438,849.3 445,850.9 452,860.6 459,863.1 466,861.5 473,857.1 480,850.1 487,842.8 494,838.7 501,834.4 508,834.7 515,835.2 522,835.5 529,835.8 536,836.3 543,833.1 550,831.1 557,829.3 564,823.3 571,820.6 578,816.8 585,820.1" fill="none" stroke="#1515b5" stroke-width="2.4" stroke-linejoin="round" stroke-linecap="round"/>
<rect x="15" y="673" width="94" height="57" fill="#f5f5f5" fill-opacity="0.9"/></svg>
<span class="t" style="left:19.3px;top:678.0px;font-size:11.5px;line-height:11.5px;color:#000;font-weight:bold;letter-spacing:0.92px;">Pane1:</span>
<span class="t" style="left:19.3px;top:692.0px;font-size:11.5px;line-height:11.5px;color:#1a1ab0;letter-spacing:0.69px;">macd [RIZ2]</span>
<span class="t" style="left:19.3px;top:706.0px;font-size:11.5px;line-height:11.5px;color:#8b1a1a;letter-spacing:0.54px;">Падение [RIZ2]</span>
<span class="t" style="left:19.3px;top:719.0px;font-size:11.5px;line-height:11.5px;color:#4a7a10;letter-spacing:0.56px;">Рост [RIZ2]</span>
<svg class="l" width="1234" height="955" viewBox="0 0 1234 955"><rect x="7" y="672" width="6.5" height="13" fill="#8b1010" /></svg>
<span class="t" style="left:7.5px;top:674.0px;font-size:11.5px;line-height:11.5px;color:#fff;font-weight:bold;">1</span>
<span class="t" style="left:7.5px;top:719.0px;font-size:11.5px;line-height:11.5px;color:#000;">1</span>
<span class="t" style="left:7.5px;top:764.0px;font-size:11.5px;line-height:11.5px;color:#000;">1</span>
<span class="t" style="left:7.5px;top:809.0px;font-size:11.5px;line-height:11.5px;color:#000;">0</span>
<span class="t" style="left:7.5px;top:855.0px;font-size:11.5px;line-height:11.5px;color:#000;">0</span>
<span class="t" style="left:614.2px;top:675.0px;font-size:11.5px;line-height:11.5px;color:#000;letter-spacing:0.41px;">300</span>
<span class="t" style="left:614.2px;top:729.0px;font-size:11.5px;line-height:11.5px;color:#000;letter-spacing:0.41px;">200</span>
<span class="t" style="left:614.2px;top:783.0px;font-size:11.5px;line-height:11.5px;color:#000;letter-spacing:0.41px;">100</span>
<span class="t" style="left:627.7px;top:837.0px;font-size:11.5px;line-height:11.5px;color:#000;">0</span>
<svg class="l" width="1234" height="955" viewBox="0 0 1234 955"><rect x="621" y="813" width="13.5" height="13.3" fill="#0a0ab8" /></svg>
<span class="t" style="left:621.7px;top:815.0px;font-size:11px;line-height:11px;color:#fff;letter-spacing:-0.23px;-webkit-text-stroke:0.4px #fff;">41</span>
<svg class="l" width="1234" height="955" viewBox="0 0 1234 955"><rect x="6" y="907" width="629" height="1.4" fill="#000" />
<rect x="7" y="898" width="6.5" height="13" fill="#1c6b1c" /></svg>
<span class="t" style="left:7.5px;top:900.0px;font-size:11.5px;line-height:11.5px;color:#fff;font-weight:bold;">0</span>
<span class="t" style="left:26.0px;top:912.0px;font-size:11.5px;line-height:11.5px;color:#000;letter-spacing:0.68px;">10:00</span>
<span class="t" style="left:110.0px;top:912.0px;font-size:11.5px;line-height:11.5px;color:#000;letter-spacing:0.68px;">12:00</span>
<span class="t" style="left:194.0px;top:912.0px;font-size:11.5px;line-height:11.5px;color:#000;letter-spacing:0.68px;">14:00</span>
<span class="t" style="left:278.0px;top:912.0px;font-size:11.5px;line-height:11.5px;color:#000;letter-spacing:0.68px;">16:00</span>
<span class="t" style="left:362.0px;top:912.0px;font-size:11.5px;line-height:11.5px;color:#000;letter-spacing:0.68px;">18:00</span>
<span class="t" style="left:432.0px;top:912.0px;font-size:11.5px;line-height:11.5px;color:#000;letter-spacing:0.68px;">20:00</span>
<span class="t" style="left:516.0px;top:912.0px;font-size:11.5px;line-height:11.5px;color:#000;letter-spacing:0.68px;">22:00</span>
<span class="t" style="left:26.0px;top:925.0px;font-size:11.5px;line-height:11.5px;color:#000;letter-spacing:0.49px;">14.12.2012</span>
<svg class="l" width="1234" height="955" viewBox="0 0 1234 955"><path d="M12,944.5 l4,-3.5 v7 z" fill="#8a8a8a"/>
<path d="M624,940.8 l4.5,3.6 l-4.5,3.6 z" fill="#7a7a7a"/>
<rect x="595.5" y="937.5" width="21" height="13.5" rx="2" fill="url(#gThumb)" stroke="#8e8e8e" stroke-width="1"/>
<line x1="603.5" y1="941" x2="603.5" y2="948" stroke="#333" stroke-width="1.2" />
<line x1="606.5" y1="941" x2="606.5" y2="948" stroke="#333" stroke-width="1.2" />
<line x1="609.5" y1="941" x2="609.5" y2="948" stroke="#333" stroke-width="1.2" />
<rect x="645.2" y="117.2" width="586.5" height="835" fill="#fff" />
<path d="M646.2,952 V118" fill="none" stroke="#8f8f8f" stroke-width="2"/>
<path d="M645.2,118 H1229 Q1230.5,118 1230.5,119.5" fill="none" stroke="#96969c" stroke-width="1.4"/>
<rect x="1231.5" y="117" width="2.5" height="836" fill="#f1f1f1" />
<path d="M1230.7,119 V951.3 H647" fill="none" stroke="#bdbdbd" stroke-width="1.4"/>
<rect x="648.5" y="120.5" width="72" height="565" fill="#fff" stroke="#000" stroke-width="1"/>
<rect x="722.5" y="120.5" width="72" height="565" fill="#fff" stroke="#000" stroke-width="1"/>
<rect x="648.5" y="687.5" width="72" height="241" fill="#fff" stroke="#000" stroke-width="1"/>
<rect x="722.5" y="687.5" width="72" height="241" fill="#fff" stroke="#000" stroke-width="1"/>
<rect x="794" y="120" width="2" height="809" fill="#000" />
<rect x="648" y="120" width="148" height="2" fill="#8a8a8a" />
<rect x="648" y="928" width="147" height="1" fill="#909090" /></svg>
<span class="t" style="left:649.3px;top:122.0px;font-size:11px;line-height:11px;color:#000;letter-spacing:0.66px;">Главное:</span>
<span class="t" style="left:649.3px;top:136.0px;font-size:11px;line-height:11px;color:#000;letter-spacing:0.52px;">Левая</span>
<span class="t" style="left:723.3px;top:122.0px;font-size:11px;line-height:11px;color:#000;letter-spacing:0.66px;">Главное:</span>
<span class="t" style="left:723.3px;top:136.0px;font-size:11px;line-height:11px;color:#000;letter-spacing:0.45px;">Правая</span>
<span class="t" style="left:649.3px;top:689.0px;font-size:11px;line-height:11px;color:#000;letter-spacing:0.37px;">Pane1:</span>
<span class="t" style="left:649.3px;top:702.0px;font-size:11px;line-height:11px;color:#000;letter-spacing:0.52px;">Левая</span>
<span class="t" style="left:723.3px;top:689.0px;font-size:11px;line-height:11px;color:#000;letter-spacing:0.37px;">Pane1:</span>
<span class="t" style="left:723.3px;top:702.0px;font-size:11px;line-height:11px;color:#000;letter-spacing:0.35px;">Правая</span>
<svg class="l" width="1234" height="955" viewBox="0 0 1234 955"><path d="M1058,188 L1151,269" stroke="#c4c4c4" stroke-width="1" fill="none"/>
<path d="M1144,265.5 L1151.5,269.5 L1147.5,262" stroke="#c4c4c4" stroke-width="1" fill="none"/>
<line x1="941" y1="164.5" x2="962" y2="164.5" stroke="#d0d0d0" stroke-width="1" />
<circle cx="951" cy="164.5" r="3.2" fill="#cfcfcf"/>
<path d="M953.5,162 L961.5,164.5 L953.5,167 z" fill="#d4d4d4"/>
<line x1="1137" y1="285.2" x2="1153" y2="285.2" stroke="#d4d4d4" stroke-width="1" />
<circle cx="1144.8" cy="285.2" r="3.2" fill="#d0d0d0"/>
<line x1="1134" y1="320.8" x2="1153" y2="320.8" stroke="#d4d4d4" stroke-width="1" />
<circle cx="1143.7" cy="320.8" r="3.2" fill="#d0d0d0"/></svg>
<span class="t" style="left:1146.0px;top:287.0px;font-size:11px;line-height:11px;color:#e4e4e4;">m</span>
<span class="t" style="left:1146.0px;top:323.0px;font-size:11px;line-height:11px;color:#e2e2e2;letter-spacing:-0.30px;">macd</span>
<svg class="l" width="1234" height="955" viewBox="0 0 1234 955"><rect x="848.5" y="141" width="92.0" height="46.5" rx="5" fill="#add8e6" stroke="#3c3c3c" stroke-width="1" filter="url(#sh)"/></svg>
<span class="t" style="left:852.8px;top:146.0px;font-size:11.5px;line-height:11.5px;color:#000;letter-spacing:0.40px;">Источник1</span>
<span class="t" style="left:852.8px;top:168.0px;font-size:11.5px;line-height:11.5px;color:#000;letter-spacing:0.52px;">Проспект:RIZ2</span>
<svg class="l" width="1234" height="955" viewBox="0 0 1234 955"><rect x="961.5" y="139.3" width="97.0" height="49.69999999999999" rx="4" fill="#90ee90" stroke="#3c3c3c" stroke-width="1" filter="url(#sh)"/></svg>
<span class="t" style="left:970.5px;top:150.0px;font-size:11.5px;line-height:11.5px;color:#000;letter-spacing:0.41px;">Закрытие</span>
<svg class="l" width="1234" height="955" viewBox="0 0 1234 955"><rect x="971" y="161.8" width="78.5" height="18.4" rx="3" fill="#90ee90" stroke="#6e6e6e" stroke-width="1"/><rect x="972" y="162.8" width="76.5" height="16.4" rx="2" fill="none" stroke="#eefbee" stroke-width="1"/></svg>
<span class="t" style="left:974.5px;top:166.0px;font-size:11.5px;line-height:11.5px;color:#000;letter-spacing:0.34px;">Закрытие</span>
<svg class="l" width="1234" height="955" viewBox="0 0 1234 955"><path d="M1036.5,169 h7.5 l-3.75,4.2 z" fill="#000"/>
<rect x="828.5" y="219.5" width="309.0" height="65.0" rx="4" fill="#90ee90" stroke="#3c3c3c" stroke-width="1" filter="url(#sh)"/></svg>
<span class="t" style="left:838.0px;top:231.0px;font-size:11px;line-height:11px;color:#000;letter-spacing:-0.17px;">Рост</span>
<span class="t" style="left:866.0px;top:232.0px;font-size:10px;line-height:10px;color:#000;letter-spacing:0.21px;">Логическая формула</span>
<span class="t" style="left:840.0px;top:246.0px;font-size:11.5px;line-height:11.5px;color:#778377;letter-spacing:0.74px;">Выражение macd&gt;macd[i-1]&amp;macd[i-2]&gt;macd[i-1]</span>
<span class="t" style="left:840.0px;top:262.0px;font-size:11.5px;line-height:11.5px;color:#778377;letter-spacing:0.38px;">Начинать с</span>
<span class="t" style="left:1122.0px;top:262.0px;font-size:11.5px;line-height:11.5px;color:#778377;">2</span>
<svg class="l" width="1234" height="955" viewBox="0 0 1234 955"><rect x="825.5" y="307" width="309.0" height="65" rx="4" fill="#90ee90" stroke="#3c3c3c" stroke-width="1" filter="url(#sh)"/></svg>
<span class="t" style="left:835.0px;top:318.0px;font-size:11px;line-height:11px;color:#000;letter-spacing:0.43px;">Падение</span>
<span class="t" style="left:887.0px;top:319.0px;font-size:10px;line-height:10px;color:#000;letter-spacing:0.24px;">Логическая формула</span>
<span class="t" style="left:837.0px;top:333.0px;font-size:11.5px;line-height:11.5px;color:#778377;letter-spacing:0.75px;">Выражение macd&lt;macd[i-1]&amp;macd[i-2]&lt;macd[i-1]</span>
<span class="t" style="left:837.0px;top:349.0px;font-size:11.5px;line-height:11.5px;color:#778377;letter-spacing:0.38px;">Начинать с</span>
<span class="t" style="left:1119.0px;top:349.0px;font-size:11.5px;line-height:11.5px;color:#778377;">2</span>
<svg class="l" width="1234" height="955" viewBox="0 0 1234 955"><rect x="1152.7" y="270.7" width="75.29999999999995" height="49.80000000000001" rx="3.5" fill="#90ee90" stroke="#a838dc" stroke-width="1.2" filter="url(#sh)"/></svg>
<span class="t" style="left:1162.0px;top:281.0px;font-size:11.5px;line-height:11.5px;color:#9a14d8;letter-spacing:0.13px;">macd</span>
<svg class="l" width="1234" height="955" viewBox="0 0 1234 955"><rect x="1162" y="294" width="56" height="17.5" rx="3" fill="#90ee90" stroke="#6e6e6e" stroke-width="1"/><rect x="1163" y="295" width="54" height="15.5" rx="2" fill="none" stroke="#eefbee" stroke-width="1"/></svg>
<span class="t" style="left:1166.0px;top:298.0px;font-size:11px;line-height:11px;color:#000;letter-spacing:-0.13px;">MACD</span>
<svg class="l" width="1234" height="955" viewBox="0 0 1234 955"><path d="M1206.5,300.5 h7.5 l-3.75,4.2 z" fill="#000"/>
<line x1="848.5" y1="164.5" x2="780.5" y2="164.5" stroke="#0000ff" stroke-width="1.1" />
<line x1="780.5" y1="164.5" x2="787.253353267645" y2="167.76224150583423" stroke="#0000ff" stroke-width="1.1" />
<line x1="780.5" y1="164.5" x2="787.253353267645" y2="161.23775849416577" stroke="#0000ff" stroke-width="1.1" />
<circle cx="814" cy="164.5" r="3.3" fill="#0000ff"/>
<line x1="828.5" y1="285" x2="706.5" y2="701.5" stroke="#2a852a" stroke-width="1.1" />
<line x1="706.5" y1="701.5" x2="711.5291042335448" y2="695.9359986872627" stroke="#2a852a" stroke-width="1.1" />
<line x1="706.5" y1="701.5" x2="705.2677093695738" y2="694.1019286430743" stroke="#2a852a" stroke-width="1.1" />
<circle cx="767" cy="493" r="3.3" fill="#1e7a1e"/>
<line x1="825.5" y1="372" x2="706.8" y2="701.5" stroke="#9a2236" stroke-width="1.1" />
<line x1="706.8" y1="701.5" x2="712.158022219561" y2="696.2519910542483" stroke="#9a2236" stroke-width="1.1" />
<line x1="706.8" y1="701.5" x2="706.0196933927217" y2="694.0407023387829" stroke="#9a2236" stroke-width="1.1" />
<circle cx="766" cy="537" r="3.3" fill="#87101c"/>
<line x1="1152.5" y1="320.5" x2="779.8" y2="701" stroke="#3546cc" stroke-width="1.1" />
<line x1="779.8" y1="701" x2="786.8561523815401" y2="698.4582066235657" stroke="#3546cc" stroke-width="1.1" />
<line x1="779.8" y1="701" x2="782.1951195075283" y2="693.8927218610316" stroke="#3546cc" stroke-width="1.1" />
<circle cx="966" cy="511" r="3.3" fill="#1626c8"/>
<rect x="647" y="930" width="133" height="21" fill="#fdfdfd" />
<line x1="647" y1="929.5" x2="1230" y2="929.5" stroke="#a0a0a0" stroke-width="1" /></svg>
<span class="t" style="left:648.0px;top:935.0px;font-size:12px;line-height:12px;color:#000;letter-spacing:0.10px;">100%</span>
<svg class="l" width="1234" height="955" viewBox="0 0 1234 955"><rect x="685" y="936.5" width="90" height="1.5" fill="#d9d9d9" />
<line x1="685.5" y1="947.8" x2="685.5" y2="951" stroke="#b4b4b4" stroke-width="1" />
<line x1="695.4" y1="947.8" x2="695.4" y2="951" stroke="#b4b4b4" stroke-width="1" />
<line x1="705.3" y1="947.8" x2="705.3" y2="951" stroke="#b4b4b4" stroke-width="1" />
<line x1="715.2" y1="947.8" x2="715.2" y2="951" stroke="#b4b4b4" stroke-width="1" />
<line x1="725.1" y1="947.8" x2="725.1" y2="951" stroke="#b4b4b4" stroke-width="1" />
<line x1="735.0" y1="947.8" x2="735.0" y2="951" stroke="#b4b4b4" stroke-width="1" />
<line x1="744.9" y1="947.8" x2="744.9" y2="951" stroke="#b4b4b4" stroke-width="1" />
<line x1="754.8" y1="947.8" x2="754.8" y2="951" stroke="#b4b4b4" stroke-width="1" />
<line x1="764.7" y1="947.8" x2="764.7" y2="951" stroke="#b4b4b4" stroke-width="1" />
<line x1="774.6" y1="947.8" x2="774.6" y2="951" stroke="#b4b4b4" stroke-width="1" />
<path d="M721.5,930.5 h8 v12 l-4,4.5 l-4,-4.5 z" fill="url(#gThumb)" stroke="#8a8a8a" stroke-width="1"/>
<rect x="780" y="931" width="450" height="20" fill="#ececec" />
<path d="M786,940.5 l4,-3.2 v6.4 z" fill="#7a7a7a"/>
<path d="M1219,937 l4.5,3.5 l-4.5,3.5 z" fill="#5a5a5a"/>
<rect x="797.5" y="933.5" width="383" height="13.5" rx="2" fill="url(#gThumb)" stroke="#8e8e8e" stroke-width="1"/>
<line x1="985.5" y1="936.5" x2="985.5" y2="944" stroke="#333" stroke-width="1.2" />
<line x1="988.5" y1="936.5" x2="988.5" y2="944" stroke="#333" stroke-width="1.2" />
<line x1="991.5" y1="936.5" x2="991.5" y2="944" stroke="#333" stroke-width="1.2" /></svg>
</body></html>
